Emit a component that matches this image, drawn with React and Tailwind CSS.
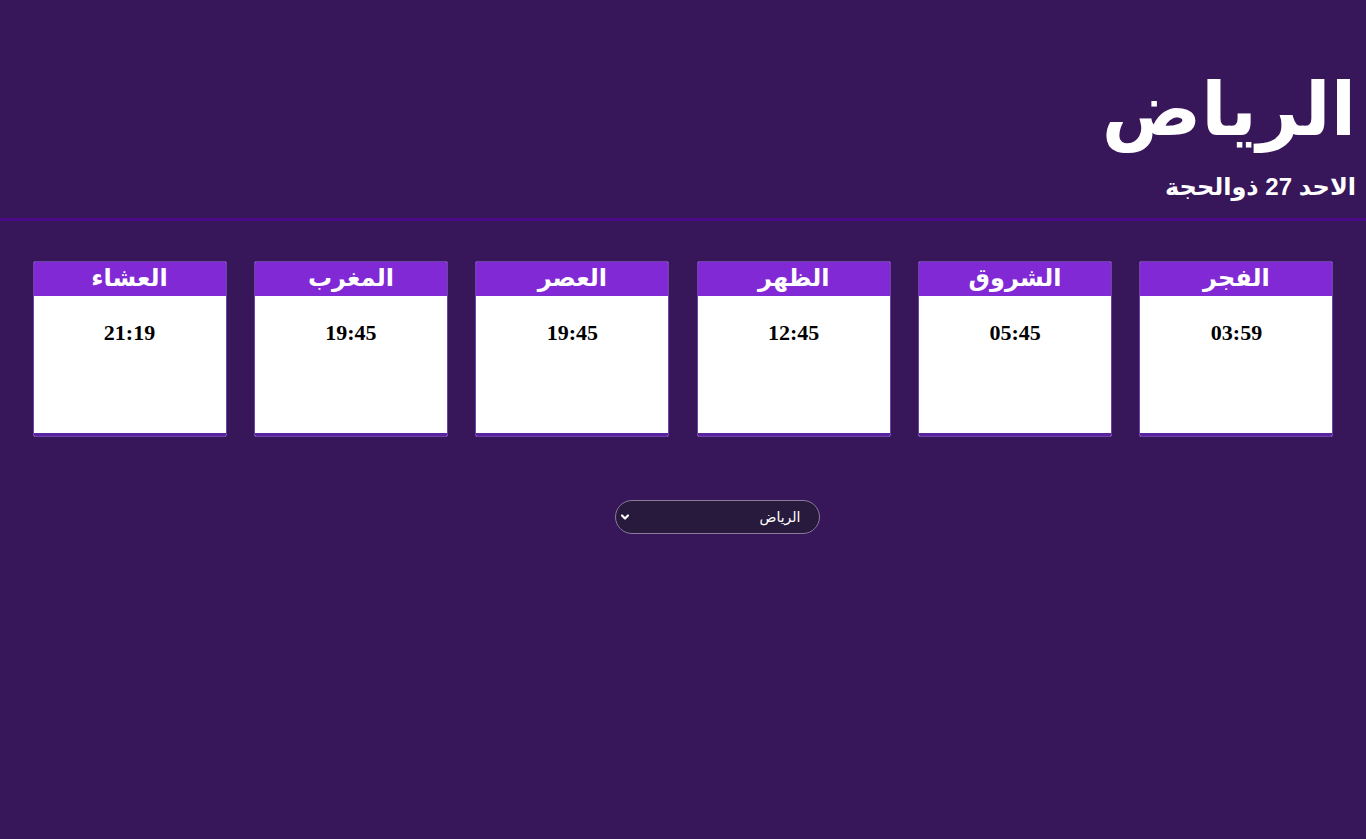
import { useState } from 'react';

const prayers = [
  { name: 'الفجر', time: '03:59' },
  { name: 'الشروق', time: '05:45' },
  { name: 'الظهر', time: '12:45' },
  { name: 'العصر', time: '19:45' },
  { name: 'المغرب', time: '19:45' },
  { name: 'العشاء', time: '21:19' },
];

function PrayerCard({ name, time }) {
  return (
    <div className="w-[194px] h-[176px] flex flex-col bg-white border border-[#6b45a3] rounded-[2px] overflow-hidden">
      <div className="h-[34px] bg-[#8229d6] text-white text-[24px] font-bold leading-[32px] text-center">
        {name}
      </div>
      <div className="flex-1 text-center pt-[20px] text-[22px] font-bold text-black" dir="ltr">
        {time}
      </div>
      <div className="h-[3px] bg-[#5a22a0]" />
    </div>
  );
}

export default function App() {
  const [city, setCity] = useState('الرياض');

  return (
    <div dir="rtl" className="min-h-[839px] bg-[#38165a] text-white font-['Liberation_Serif','DejaVu_Sans',serif]">
      <header className="px-[10px] pt-[56px] border-b-[3px] border-[#4a0a88] pb-[16px]">
        <h1 className="text-[74px] font-bold leading-[108px] font-['Liberation_Sans','DejaVu_Sans',sans-serif]">
          {city}
        </h1>
        <p className="mt-[8px] text-[24px] font-bold leading-[30px] font-['Liberation_Sans','DejaVu_Sans',sans-serif]">
          الاحد 27 ذوالحجة
        </p>
      </header>

      <main className="flex justify-center gap-[27.4px] pt-[40px]">
        {prayers.map((p) => (
          <PrayerCard key={p.name} name={p.name} time={p.time} />
        ))}
      </main>

      <div className="flex justify-center pt-[63px]">
        <div className="relative w-[205px] h-[34px] ml-[68px]">
          <select
            value={city}
            onChange={(e) => setCity(e.target.value)}
            className="appearance-none w-full h-full rounded-full bg-[#281a3c] border border-[#8a7a9c] text-white text-[14px] pr-[18px] pl-[24px] font-['Liberation_Sans','DejaVu_Sans',sans-serif] outline-none"
          >
            <option value="الرياض">الرياض</option>
            <option value="جدة">جدة</option>
            <option value="مكة">مكة</option>
            <option value="الدمام">الدمام</option>
          </select>
          <svg
            className="absolute left-[5px] top-[13px] w-[10px] h-[8px] pointer-events-none"
            viewBox="0 0 10 8"
            fill="none"
            stroke="white"
            strokeWidth="2.2"
            strokeLinecap="round"
            strokeLinejoin="round"
          >
            <path d="M2 2.5 L5 5.5 L8 2.5" />
          </svg>
        </div>
      </div>
    </div>
  );
}
